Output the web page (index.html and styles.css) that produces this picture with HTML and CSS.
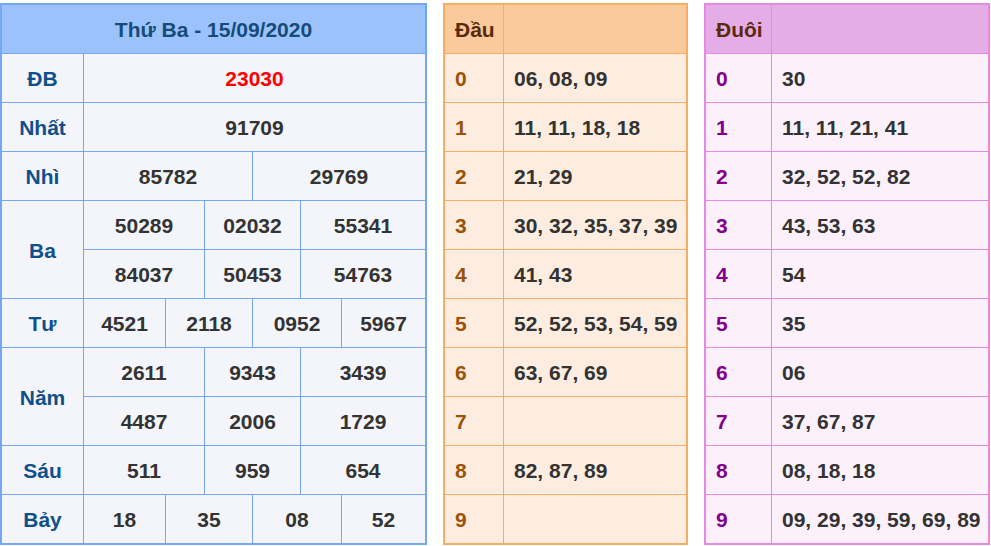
FILE: index.html
```html
<!DOCTYPE html>
<html lang="vi">
<head>
<meta charset="utf-8">
<title>Kết quả xổ số</title>
<link rel="stylesheet" href="styles.css">
</head>
<body>
<div class="wrap">
  <div class="kq">
    <div class="c head span7">Thứ Ba - 15/09/2020</div>

    <div class="c lbl">ĐB</div>
    <div class="c num red span6">23030</div>

    <div class="c lbl">Nhất</div>
    <div class="c num span6">91709</div>

    <div class="c lbl">Nhì</div>
    <div class="c num span3">85782</div>
    <div class="c num span3">29769</div>

    <div class="c lbl row2">Ba</div>
    <div class="c num span2">50289</div>
    <div class="c num span2">02032</div>
    <div class="c num span2">55341</div>
    <div class="c num span2">84037</div>
    <div class="c num span2">50453</div>
    <div class="c num span2">54763</div>

    <div class="c lbl">Tư</div>
    <div class="c num">4521</div>
    <div class="c num span2">2118</div>
    <div class="c num span2">0952</div>
    <div class="c num">5967</div>

    <div class="c lbl row2">Năm</div>
    <div class="c num span2">2611</div>
    <div class="c num span2">9343</div>
    <div class="c num span2">3439</div>
    <div class="c num span2">4487</div>
    <div class="c num span2">2006</div>
    <div class="c num span2">1729</div>

    <div class="c lbl">Sáu</div>
    <div class="c num span2">511</div>
    <div class="c num span2">959</div>
    <div class="c num span2">654</div>

    <div class="c lbl">Bảy</div>
    <div class="c num">18</div>
    <div class="c num span2">35</div>
    <div class="c num span2">08</div>
    <div class="c num">52</div>
  </div>

  <div class="lt dau">
    <div class="c th">Đầu</div><div class="c th"></div>
    <div class="c k">0</div><div class="c v">06, 08, 09</div>
    <div class="c k">1</div><div class="c v">11, 11, 18, 18</div>
    <div class="c k">2</div><div class="c v">21, 29</div>
    <div class="c k">3</div><div class="c v">30, 32, 35, 37, 39</div>
    <div class="c k">4</div><div class="c v">41, 43</div>
    <div class="c k">5</div><div class="c v">52, 52, 53, 54, 59</div>
    <div class="c k">6</div><div class="c v">63, 67, 69</div>
    <div class="c k">7</div><div class="c v"></div>
    <div class="c k">8</div><div class="c v">82, 87, 89</div>
    <div class="c k">9</div><div class="c v"></div>
  </div>

  <div class="lt duoi">
    <div class="c th">Đuôi</div><div class="c th"></div>
    <div class="c k">0</div><div class="c v">30</div>
    <div class="c k">1</div><div class="c v">11, 11, 21, 41</div>
    <div class="c k">2</div><div class="c v">32, 52, 52, 82</div>
    <div class="c k">3</div><div class="c v">43, 53, 63</div>
    <div class="c k">4</div><div class="c v">54</div>
    <div class="c k">5</div><div class="c v">35</div>
    <div class="c k">6</div><div class="c v">06</div>
    <div class="c k">7</div><div class="c v">37, 67, 87</div>
    <div class="c k">8</div><div class="c v">08, 18, 18</div>
    <div class="c k">9</div><div class="c v">09, 29, 39, 59, 69, 89</div>
  </div>
</div>
</body>
</html>
```

FILE: styles.css
```css
* { box-sizing: border-box; }
html, body { margin: 0; padding: 0; background: #ffffff; }
body {
  font-family: "Liberation Sans", Arial, sans-serif;
  font-weight: bold;
  font-size: 21px;
  color: #333333;
}
.wrap {
  display: flex;
  align-items: flex-start;
  gap: 16px;
  padding-top: 3px;
}
.c {
  display: flex;
  align-items: center;
  white-space: nowrap;
  padding-top: 2px;
}

/* main results table */
.kq {
  width: 427px;
  display: grid;
  grid-template-columns: 81px 81px 38px 47px 47px 40px 83px;
  grid-auto-rows: 48px;
  gap: 1px;
  background: #74a7f5;
  border: 2px solid #74a7f5;
}
.kq .c { justify-content: center; background: #f3f5fa; }
.kq .head { background: #9cc2fb; color: #154c79; }
.kq .lbl { color: #10508a; }
.kq .red { color: #ff0000; }
.span7 { grid-column: span 7; }
.span6 { grid-column: span 6; }
.span3 { grid-column: span 3; }
.span2 { grid-column: span 2; }
.row2 { grid-row: span 2; }

/* loto tables */
.lt {
  display: grid;
  grid-auto-rows: 48px;
  gap: 1px;
  border: 2px solid;
}
.lt .c { padding-left: 10px; }
.lt .th { color: #5a2a0c; }
.dau {
  width: 245px;
  grid-template-columns: 58px 182px;
  background: #f8ad66;
  border-color: #f8ad66;
}
.dau .c { background: #fdede0; }
.dau .th { background: #f9ca9c; }
.dau .k { color: #9c5208; }
.duoi {
  width: 286px;
  grid-template-columns: 65px 216px;
  background: #e58ae1;
  border-color: #e58ae1;
}
.duoi .c { background: #fcf0fb; }
.duoi .th { background: #e4ade7; }
.duoi .k { color: #82008c; }
```
